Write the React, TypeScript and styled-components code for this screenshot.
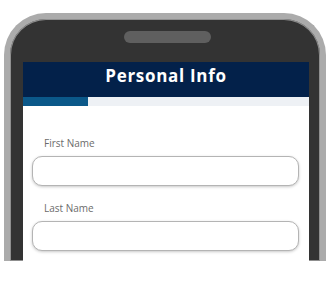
import React from "react";
import styled, { createGlobalStyle } from "styled-components";

const Global = createGlobalStyle`
  html, body { margin: 0; padding: 0; background: #ffffff; }
  body { width: 330px; height: 306px; overflow: hidden; font-family: "Open Sans", Arial, sans-serif; }
`;

const Page = styled.div`
  width: 330px;
  height: 306px;
  padding: 13px 0 0 4px;
  box-sizing: border-box;
`;

const Phone = styled.div`
  width: 322px;
  height: 248px;
  box-sizing: border-box;
  border: 6px solid #ababab;
  border-bottom: none;
  border-radius: 42px 42px 0 0;
  background: #333333;
  box-shadow: inset 0 0 0 1px #8f8f8f;
  display: flex;
  flex-direction: column;
  align-items: center;
  padding: 12px 11px 0 13px;
`;

const Speaker = styled.div`
  width: 87px;
  height: 12px;
  border-radius: 6px;
  background: #5f5f5f;
  flex-shrink: 0;
  margin-left: 2px;
`;

const Screen = styled.div`
  margin-top: 19px;
  align-self: stretch;
  flex: 1;
  background: #ffffff;
  display: flex;
  flex-direction: column;
`;

const Header = styled.div`
  height: 35px;
  box-sizing: border-box;
  padding-bottom: 9px;
  background: #03214a;
  display: flex;
  align-items: center;
  justify-content: center;
`;

const Title = styled.h1`
  margin: 0;
  color: #ffffff;
  font-family: "Open Sans", Arial, sans-serif;
  font-weight: 700;
  font-size: 17px;
  letter-spacing: 0.7px;
  line-height: 1;
`;

const Track = styled.div`
  height: 9px;
  background: #eef1f5;
  display: flex;
`;

const Fill = styled.div`
  background: #0b5889;
  height: 100%;
`;

const Form = styled.div`
  display: flex;
  flex-direction: column;
  padding: 31px 10px 0 9px;
`;

const Field = styled.div`
  display: flex;
  flex-direction: column;
  margin-bottom: 16px;
`;

const Label = styled.label`
  font-family: "Open Sans", Arial, sans-serif;
  font-size: 10px;
  line-height: 12px;
  color: #6b6b6b;
  padding-left: 12px;
  margin-bottom: 7px;
`;

const Input = styled.input`
  height: 30px;
  box-sizing: border-box;
  border: 1px solid #b4b4b4;
  border-radius: 10px;
  background: #ffffff;
  box-shadow: 0 1px 3px rgba(0, 0, 0, 0.22);
  outline: none;
`;

export default function App() {
  const progress = 0.227;
  return (
    <>
      <Global />
      <Page>
        <Phone>
          <Speaker />
          <Screen>
            <Header>
              <Title>Personal Info</Title>
            </Header>
            <Track>
              <Fill style={{ width: `${progress * 100}%` }} />
            </Track>
            <Form>
              <Field>
                <Label>First Name</Label>
                <Input type="text" />
              </Field>
              <Field>
                <Label>Last Name</Label>
                <Input type="text" />
              </Field>
            </Form>
          </Screen>
        </Phone>
      </Page>
    </>
  );
}
